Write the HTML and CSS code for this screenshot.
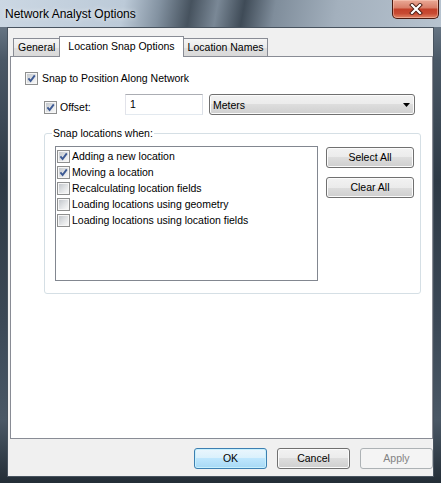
FILE: index.html
```html
<!DOCTYPE html>
<html>
<head>
<meta charset="utf-8">
<link rel="stylesheet" href="styles.css">
</head>
<body>
<div class="window">
  <div class="titlebar">
    <span class="title">Network Analyst Options</span>
    <span class="close">
      <svg class="close-x" viewBox="0 0 16 12" width="16" height="12">
        <path d="M4 2 L12 10 M12 2 L4 10" stroke="#4a1c12" stroke-width="4" stroke-linecap="square" fill="none"/>
        <path d="M4 2 L12 10 M12 2 L4 10" stroke="#ffffff" stroke-width="2.2" stroke-linecap="square" fill="none"/>
      </svg>
    </span>
  </div>
  <div class="client">
    <div class="tabs">
      <div class="tab">General</div>
      <div class="tab active">Location Snap Options</div>
      <div class="tab">Location Names</div>
    </div>
    <div class="panel">
      <div class="check">
        <span class="cb"><svg viewBox="0 0 9 9" width="9" height="9"><path d="M1.4 4.4 L3.6 7 L7.8 1.4" fill="none" stroke="#3d5a94" stroke-width="1.9"/></svg></span>
        <span>Snap to Position Along Network</span>
      </div>
      <div class="offset-row">
        <div class="check offset-label">
          <span class="cb"><svg viewBox="0 0 9 9" width="9" height="9"><path d="M1.4 4.4 L3.6 7 L7.8 1.4" fill="none" stroke="#3d5a94" stroke-width="1.9"/></svg></span>
          <span>Offset:</span>
        </div>
        <div class="textbox">1</div>
        <div class="combo">
          <span>Meters</span>
          <svg viewBox="0 0 7 4" width="7" height="4"><path d="M0 0 H7 L3.5 4 Z" fill="#000"/></svg>
        </div>
      </div>
      <div class="group">
        <div class="legend">Snap locations when:</div>
        <div class="group-body">
          <div class="listbox">
            <div class="item"><span class="cb"><svg viewBox="0 0 9 9" width="9" height="9"><path d="M1.4 4.4 L3.6 7 L7.8 1.4" fill="none" stroke="#3d5a94" stroke-width="1.9"/></svg></span><span>Adding a new location</span></div>
            <div class="item"><span class="cb"><svg viewBox="0 0 9 9" width="9" height="9"><path d="M1.4 4.4 L3.6 7 L7.8 1.4" fill="none" stroke="#3d5a94" stroke-width="1.9"/></svg></span><span>Moving a location</span></div>
            <div class="item"><span class="cb"><svg viewBox="0 0 9 9" width="9" height="9"></svg></span><span>Recalculating location fields</span></div>
            <div class="item"><span class="cb"><svg viewBox="0 0 9 9" width="9" height="9"></svg></span><span>Loading locations using geometry</span></div>
            <div class="item"><span class="cb"><svg viewBox="0 0 9 9" width="9" height="9"></svg></span><span>Loading locations using location fields</span></div>
          </div>
          <div class="side">
            <div class="btn side-btn">Select All</div>
            <div class="btn side-btn">Clear All</div>
          </div>
        </div>
      </div>
    </div>
    <div class="footer">
      <div class="btn foot-btn default">OK</div>
      <div class="btn foot-btn">Cancel</div>
      <div class="btn foot-btn disabled">Apply</div>
    </div>
  </div>
</div>
</body>
</html>
```
FILE: styles.css
```css
body {
  margin: 0;
}

.window {
  width: 441px;
  height: 483px;
  box-sizing: border-box;
  display: flex;
  flex-direction: column;
  overflow: hidden;
  font-family: "Liberation Sans", Arial, sans-serif;
  font-size: 10.5px;
  color: #000;
  background: linear-gradient(to bottom, #7d8c9b 0, #4a5866 60px, #2e3a46 180px, #3b4856 320px, #4a5866 420px, #232d36 483px);
}

.titlebar {
  height: 27px;
  flex: none;
  display: flex;
  justify-content: space-between;
  align-items: flex-start;
  padding: 0 2px 0 5px;
  background: linear-gradient(100deg, #cbd7e3 0%, #bccad8 28%, #8392a1 36%, #46525e 43%, #7a8896 49%, #3f4b57 55%, #7f8d9b 62%, #a3b0bd 76%, #b7c3cf 100%);
}

.title {
  font-size: 12px;
  line-height: 16px;
  margin-top: 6px;
  color: #000;
  text-shadow: 0 0 5px rgba(255, 255, 255, 0.85);
}

.close {
  width: 47px;
  height: 19px;
  box-sizing: border-box;
  border: 1px solid #4a1a10;
  border-top: none;
  border-radius: 0 0 5px 5px;
  background: linear-gradient(#eaa996 0%, #d9806a 42%, #c3412a 52%, #c84b33 75%, #e08566 100%);
  box-shadow: inset 0 0 0 1px rgba(255, 215, 200, 0.45);
  display: flex;
  align-items: center;
  justify-content: center;
}

.close-x {
  display: block;
}

.client {
  flex: 1;
  margin: 0 7px 6px 7px;
  border: 1px solid #48535f;
  background: #f0f0f0;
  display: flex;
  flex-direction: column;
  padding: 8px 0 0 2px;
}

.tabs {
  height: 20px;
  display: flex;
  align-items: flex-end;
  padding-left: 3px;
}

.tab {
  box-sizing: border-box;
  height: 18px;
  border: 1px solid #898c95;
  border-bottom: none;
  padding: 0 4px;
  line-height: 17px;
  background: linear-gradient(#f5f5f5 0%, #ebebeb 50%, #dfdfdf 51%, #d9d9d9 100%);
  margin-left: -1px;
}

.tab:first-child {
  margin-left: 0;
}

.tab.active {
  height: 21px;
  margin-bottom: -1px;
  padding: 0 8px;
  line-height: 18px;
  background: #fff;
  position: relative;
  z-index: 1;
}

.panel {
  width: 423px;
  height: 383px;
  box-sizing: border-box;
  border: 1px solid #898c95;
  background: #fff;
  padding: 15px 0 0 14px;
}

.check {
  display: flex;
  align-items: center;
  gap: 4px;
  line-height: 13px;
}

.cb {
  width: 13px;
  height: 13px;
  box-sizing: border-box;
  border: 1px solid #8e8f8f;
  padding: 1px;
  background: #f6f6f6;
  flex: none;
}

.cb svg {
  display: block;
  background: linear-gradient(135deg, #c3c7cc 0%, #e2e4e6 55%, #f8f8f8 100%);
}

.offset-row {
  display: flex;
  height: 21px;
  margin-top: 9px;
  padding-left: 19px;
}

.offset-label {
  width: 81px;
  align-self: flex-start;
  margin-top: 7px;
  gap: 3px;
}

.textbox {
  width: 78px;
  height: 21px;
  box-sizing: border-box;
  border: 1px solid;
  border-color: #abadb3 #dbdfe6 #e3e9ef #e2e3ea;
  background: #fff;
  padding-left: 4px;
  line-height: 19px;
}

.combo {
  margin-left: 6px;
  width: 206px;
  height: 21px;
  box-sizing: border-box;
  border: 1px solid #707070;
  border-radius: 3px;
  background: linear-gradient(#f2f2f2 0%, #ebebeb 50%, #dddddd 50%, #cfcfcf 100%);
  box-shadow: inset 0 0 0 1px #fbfbfb;
  display: flex;
  align-items: center;
  justify-content: space-between;
  padding: 0 4px 0 3px;
}

.combo svg {
  display: block;
}

.group {
  margin: 18px 0 0 19px;
  width: 377px;
  height: 161px;
  box-sizing: border-box;
  border: 1px solid #d5dfe5;
  border-radius: 3px;
}

.legend {
  width: fit-content;
  margin: -7px 0 0 7px;
  padding: 0 1px;
  line-height: 13px;
  background: #fff;
}

.group-body {
  display: flex;
  margin: 6px 0 0 10px;
}

.listbox {
  width: 263px;
  height: 135px;
  box-sizing: border-box;
  border: 1px solid #828790;
  background: #fff;
  padding: 1px 0 0 1px;
}

.item {
  display: flex;
  align-items: center;
  gap: 2px;
  height: 16px;
}

.side {
  margin: 1px 0 0 8px;
  display: flex;
  flex-direction: column;
  gap: 9px;
}

.btn {
  box-sizing: border-box;
  height: 21px;
  border: 1px solid #707070;
  border-radius: 3px;
  background: linear-gradient(#f2f2f2 0%, #ebebeb 50%, #dddddd 50%, #cfcfcf 100%);
  box-shadow: inset 0 0 0 1px #fbfbfb;
  text-align: center;
  line-height: 19px;
}

.side-btn {
  width: 88px;
}

.footer {
  display: flex;
  justify-content: flex-end;
  gap: 10px;
  margin-top: 9px;
}

.foot-btn {
  width: 73px;
}

.foot-btn.default {
  border-color: #3c7fb1;
  background: linear-gradient(#eaf6fd 0%, #d9f0fc 50%, #bee6fd 50%, #a7d9f5 100%);
  box-shadow: inset 0 0 0 1px #c8f0fd;
}

.foot-btn.disabled {
  border-color: #adb2b5;
  background: #f4f4f4;
  box-shadow: none;
  color: #838383;
}
```
